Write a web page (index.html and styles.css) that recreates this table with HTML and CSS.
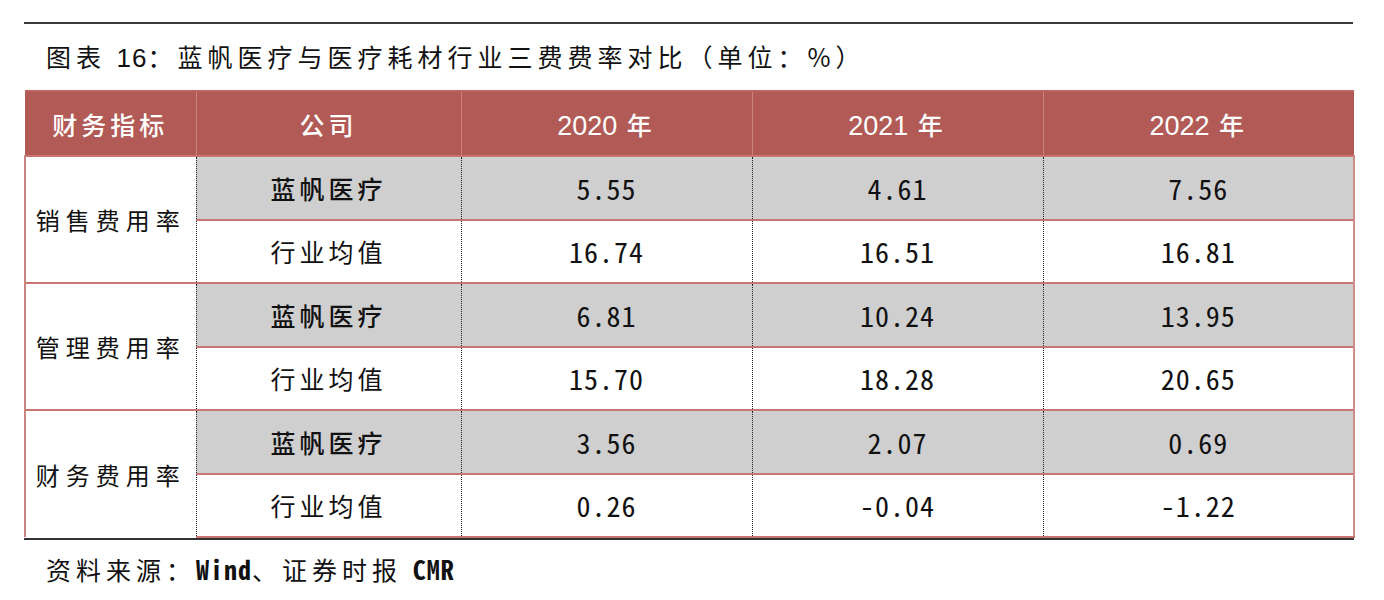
FILE: index.html
```html
<!DOCTYPE html>
<html lang="zh-CN">
<head>
<meta charset="utf-8">
<title>图表 16</title>
<link rel="stylesheet" href="styles.css">
</head>
<body>
<div class="page">
  <div class="rule-top"></div>
  <h1 class="title">图表 <span class="lat">16</span>：蓝帆医疗与医疗耗材行业三费费率对比（单位：%）</h1>
  <table class="data">
    <colgroup>
      <col class="c1"><col class="c2"><col class="c3"><col class="c4"><col class="c5">
    </colgroup>
    <thead>
      <tr>
        <th>财务指标</th>
        <th class="sep">公司</th>
        <th class="sep"><span class="lat">2020</span> 年</th>
        <th class="sep"><span class="lat">2021</span> 年</th>
        <th class="sep"><span class="lat">2022</span> 年</th>
      </tr>
    </thead>
    <tbody>
      <tr class="grp shade">
        <td class="metric" rowspan="2">销售费用率</td>
        <td class="co">蓝帆医疗</td><td class="num">5.55</td><td class="num">4.61</td><td class="num">7.56</td>
      </tr>
      <tr class="low">
        <td class="co">行业均值</td><td class="num">16.74</td><td class="num">16.51</td><td class="num">16.81</td>
      </tr>
      <tr class="grp shade">
        <td class="metric" rowspan="2">管理费用率</td>
        <td class="co">蓝帆医疗</td><td class="num">6.81</td><td class="num">10.24</td><td class="num">13.95</td>
      </tr>
      <tr class="low">
        <td class="co">行业均值</td><td class="num">15.70</td><td class="num">18.28</td><td class="num">20.65</td>
      </tr>
      <tr class="grp shade">
        <td class="metric" rowspan="2">财务费用率</td>
        <td class="co">蓝帆医疗</td><td class="num">3.56</td><td class="num">2.07</td><td class="num">0.69</td>
      </tr>
      <tr class="low last">
        <td class="co">行业均值</td><td class="num">0.26</td><td class="num">-0.04</td><td class="num">-1.22</td>
      </tr>
    </tbody>
  </table>
  <div class="rule-bottom"></div>
  <p class="source">资料来源：<span class="mono">Wind</span>、证券时报 <span class="mono">CMR</span></p>
</div>
</body>
</html>
```

FILE: styles.css
```css
* { box-sizing: border-box; }
html, body { margin: 0; padding: 0; background: #ffffff; }
body {
  font-family: "Noto Sans CJK SC", "Noto Sans", sans-serif;
  color: #111;
}
.page {
  padding: 22px 0 0 24px;
  width: 1354px;
}
.rule-top {
  height: 2px;
  background: #3a3a3a;
  width: 1329px;
}
.title {
  margin: 0;
  height: 66px;
  line-height: 64px;
  padding-left: 22px;
  font-size: 25px;
  font-weight: normal;
  letter-spacing: 5px;
  color: #111;
}
.lat { font-family: "Liberation Sans", "Noto Sans", sans-serif; letter-spacing: 0; }
.title .lat { font-size: 26px; letter-spacing: 1px; }
.data {
  border-collapse: collapse;
  table-layout: fixed;
  width: 1329px;
  border-top: 2px solid #c0625e;
}
.c1 { width: 171px; }
.c2 { width: 265px; }
.c3 { width: 291px; }
.c4 { width: 291px; }
.c5 { width: 311px; }
thead th {
  background: #b25a55;
  color: #fff;
  height: 65px;
  font-size: 25px;
  font-weight: 500;
  letter-spacing: 4px;
  text-align: center;
  padding: 0;
}
thead th .lat { font-size: 27px; letter-spacing: 0; }
thead th.sep { border-left: 1px solid #c98480; }
tbody td {
  padding: 0;
  text-align: center;
  font-size: 25px;
  letter-spacing: 4px;
  border-left: 1px dotted #222;
}
tbody tr { height: 63.5px; }
tbody tr.grp td { border-top: 2px solid #c97672; }
tbody tr.low td { border-top: 2px solid #c97672; }
tbody tr.shade td.co, tbody tr.shade td.num { background: #cfcfcf; }
tbody tr.shade td.co { font-weight: 500; }
td.metric {
  background: #fff;
  border-left: 2px solid #c98480;
  font-size: 24px;
  letter-spacing: 6px;
}
tbody td:last-child { border-right: 2px solid #d08c89; }
tbody tr.last td { border-bottom: 2px solid #c97672; }
td.num {
  font-family: "Noto Sans Mono CJK SC", "DejaVu Sans Mono", monospace;
  font-size: 28px;
  letter-spacing: 1px;
}
.rule-bottom {
  height: 2px;
  background: #333;
  width: 1330px;
}
.source {
  margin: 0;
  padding-left: 22px;
  height: 56px;
  line-height: 58px;
  font-size: 25px;
  letter-spacing: 5px;
}
.mono { font-family: "Noto Sans Mono CJK SC", "DejaVu Sans Mono", monospace; font-weight: bold; font-size: 26px; letter-spacing: 1px; }
```
